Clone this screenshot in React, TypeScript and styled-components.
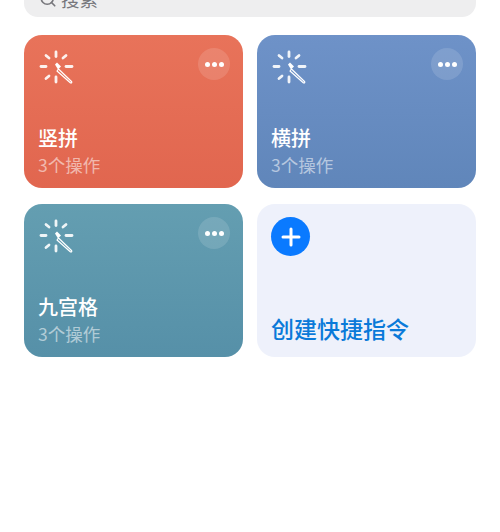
import React from "react";
import styled, { createGlobalStyle } from "styled-components";
import { Search } from "lucide-react";

const GlobalStyle = createGlobalStyle`
  html, body {
    margin: 0;
    padding: 0;
    height: 532px;
    overflow: hidden;
    background: #fff;
    font-family: "Noto Sans CJK SC", "Liberation Sans", sans-serif;
  }
`;

const shortcuts = [
  { name: "竖拼", tone: "red" },
  { name: "横拼", tone: "blue" },
  { name: "九宫格", tone: "teal" },
] as const;

type Tone = (typeof shortcuts)[number]["tone"];

const gradients: Record<Tone, string> = {
  red: "linear-gradient(180deg, #e8735a 0%, #e1664f 100%)",
  blue: "linear-gradient(180deg, #6e92c8 0%, #6086ba 100%)",
  teal: "linear-gradient(180deg, #649eb1 0%, #5690a8 100%)",
};

const WandIcon = () => (
  <svg width="36" height="36" viewBox="0 0 36 36" fill="none">
    <g stroke="#fff" strokeWidth="2.8" strokeLinecap="round" opacity="0.9">
      <path d="M18 3v4.500" />
      <path d="M18 28v5" />
      <path d="M3 17.500h5" />
      <path d="M28 17.500h6" />
      <path d="M8 6.500l3 2.500" />
      <path d="M28 6.500l-3 2.500" />
      <path d="M8 29.500l3-2.500" />
    </g>
    <path d="M20.500 20l13 12.500c.6.600.2 1.500-.5 1.500-.4 0-.7-.2-1-.5L19 22z" stroke="#fff" strokeWidth="1.200" strokeLinejoin="round" />
    <path d="M17 15.500l2-2 4 4-3 3z" fill="#fff" />
  </svg>
);

export default function App() {
  return (
    <>
      <GlobalStyle />
      <Page>
        <SearchBar>
          <Search size={18} strokeWidth={2.2} color="#77777c" />
          <SearchText>搜索</SearchText>
        </SearchBar>
        <Grid>
          {shortcuts.map((item) => (
            <Card key={item.name} $tone={item.tone}>
              <CardTop>
                <WandIcon />
                <MoreButton aria-label="更多">
                  <Dot />
                  <Dot />
                  <Dot />
                </MoreButton>
              </CardTop>
              <CardText>
                <Title>{item.name}</Title>
                <Subtitle>3个操作</Subtitle>
              </CardText>
            </Card>
          ))}
          <CreateCard>
            <PlusCircle>
              <svg width="20" height="20" viewBox="0 0 20 20" fill="none">
                <path d="M10 2v16M2 10h16" stroke="#fff" strokeWidth="3" strokeLinecap="round" />
              </svg>
            </PlusCircle>
            <CreateLabel>创建快捷指令</CreateLabel>
          </CreateCard>
        </Grid>
      </Page>
    </>
  );
}

const Page = styled.div`
  width: 500px;
  height: 532px;
  margin-top: -20px;
  padding: 0 24px;
  box-sizing: border-box;
`;

const SearchBar = styled.div`
  height: 37px;
  padding: 0 10px 0 15px;
  display: flex;
  align-items: center;
  gap: 4px;
  box-sizing: border-box;
  border-radius: 0 0 14px 14px;
  background: #eeeeef;
`;

const SearchText = styled.span`
  color: #77777c;
  font-size: 18.500px;
`;

const Grid = styled.div`
  margin-top: 18px;
  display: grid;
  grid-template-columns: 219px 219px;
  grid-auto-rows: 153px;
  gap: 16px 14px;
`;

const Card = styled.div<{ $tone: Tone }>`
  padding: 14px 14px 11px 14px;
  display: flex;
  flex-direction: column;
  justify-content: space-between;
  box-sizing: border-box;
  border-radius: 18px;
  background: ${({ $tone }) => gradients[$tone]};
`;

const CardTop = styled.div`
  display: flex;
  justify-content: space-between;
  align-items: flex-start;
`;

const MoreButton = styled.div`
  width: 32px;
  height: 32px;
  margin: -1px -1px 0 0;
  display: flex;
  align-items: center;
  justify-content: center;
  gap: 2px;
  border-radius: 50%;
  background: rgba(255, 255, 255, 0.13);
`;

const Dot = styled.span`
  width: 5px;
  height: 5px;
  border-radius: 50%;
  background: #fff;
`;

const CardText = styled.div`
  display: flex;
  flex-direction: column;
`;

const Title = styled.div`
  color: #fff;
  font-size: 20px;
  font-weight: 500;
  line-height: 28px;
  margin-bottom: 1px;
`;

const Subtitle = styled.div`
  color: rgba(255, 255, 255, 0.55);
  font-size: 17.500px;
  line-height: 24px;
`;

const CreateCard = styled.div`
  padding: 13px 14px 13px;
  display: flex;
  flex-direction: column;
  justify-content: space-between;
  box-sizing: border-box;
  border-radius: 18px;
  background: #eef1fb;
`;

const PlusCircle = styled.div`
  width: 39px;
  height: 39px;
  display: flex;
  align-items: center;
  justify-content: center;
  border-radius: 50%;
  background: #0a7aff;
`;

const CreateLabel = styled.div`
  color: #0a7ad9;
  font-size: 23px;
  font-weight: 500;
  line-height: 32px;
`;
